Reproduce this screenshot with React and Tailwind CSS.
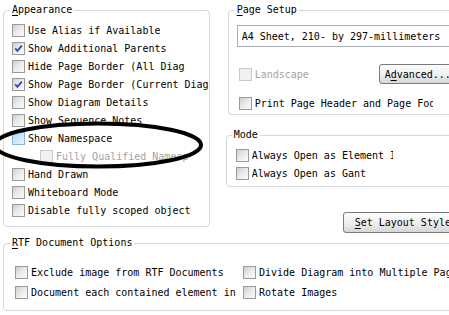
import React from 'react';

const GROUP = 'border border-[#d3d7db] rounded-[4px] m-0 p-0';
const LEGEND = 'leading-[12px] px-[2px]';

function Box({ checked, state }) {
  let tone = 'border-[#9a9a9a] bg-linear-to-br from-[#cfcfcf] via-[#ebebeb] to-[#fbfbfb]';
  if (state === 'hover') tone = 'border-[#86b5e0] bg-linear-to-br from-[#b3d8f3] via-[#cfe6f8] to-[#e9f4fc]';
  if (state === 'disabled') tone = 'border-[#c9c9c9] bg-[#f1f1f1]';
  return (
    <span className={`relative block w-[13px] h-[13px] shrink-0 border ${tone}`}>
      {checked && (
        <svg className="absolute inset-0" width="11" height="11" viewBox="0 0 11 11">
          <path d="M2.2 5.4 L4.4 7.8 L8.8 2.6" fill="none" stroke="#2c4f9e" strokeWidth="1.8" />
        </svg>
      )}
    </span>
  );
}

function Check({ label, checked, state, labelClass = '', className = '' }) {
  return (
    <div className={`flex items-center h-[18px] whitespace-nowrap ${className}`}>
      <Box checked={checked} state={state} />
      <span className={`ml-[3px] overflow-hidden ${state === 'disabled' ? 'text-[#a3a3a3]' : ''} ${labelClass}`}>
        {label}
      </span>
    </div>
  );
}

export default function App() {
  return (
    <div className="relative w-[449px] h-[315px] overflow-hidden bg-white text-black font-['DejaVu_Sans_Mono',monospace] text-[10px]">
      <div className="flex h-[233px]">
        <fieldset className={`${GROUP} ml-[3px] mt-[4px] w-[210px] h-[223px]`}>
          <legend className={`${LEGEND} ml-[6px]`}>
            <span className="underline underline-offset-2">A</span>ppearance
          </legend>
          <div className="pl-[8px] pt-[5px] flex flex-col">
            <Check label="Use Alias if Available" />
            <Check label="Show Additional Parents" checked />
            <Check label="Hide Page Border (All Diag" />
            <Check label="Show Page Border (Current Diag" checked />
            <Check label="Show Diagram Details" />
            <Check label="Show Sequence Notes" />
            <Check label="Show Namespace" state="hover" />
            <Check label="Fully Qualified Namespace" state="disabled" className="ml-[28px]" labelClass="w-[132px]" />
            <Check label="Hand Drawn" />
            <Check label="Whiteboard Mode" />
            <Check label="Disable fully scoped object" />
          </div>
        </fieldset>

        <div className="ml-[16px] flex flex-col">
          <fieldset className={`${GROUP} ml-[2px] mt-[4px] w-[240px] h-[111px]`}>
            <legend className={`${LEGEND} ml-[6px]`}>
              <span className="underline underline-offset-2">P</span>age Setup
            </legend>
            <div className="pl-[8px] pt-[9px]">
              <div className="w-[230px] h-[22px] border border-[#a7adb3] flex items-center pl-[4px] whitespace-nowrap">
                A4 Sheet, 210- by 297-millimeters
              </div>
              <div className="flex items-center h-[20px] mt-[17px] ml-[2px]">
                <Check label="Landscape" state="disabled" className="w-[140px]" />
                <div className="w-[90px] h-[20px] border border-[#7a7a7a] rounded-[3px] bg-linear-to-b from-[#fdfdfd] via-[#f0f0f0] to-[#d8d8d8] flex items-center pl-[5px] whitespace-nowrap">
                  A<span className="underline underline-offset-2">d</span>vanced...
                </div>
              </div>
              <Check label="Print Page Header and Page Footer" className="mt-[10px] ml-[2px]" labelClass="w-[178px]" />
            </div>
          </fieldset>

          <fieldset className={`${GROUP} mt-[14px] w-[240px] h-[58px]`}>
            <legend className={`${LEGEND} ml-[5px]`}>Mode</legend>
            <div className="pl-[9px] pt-[5px] flex flex-col">
              <Check label="Always Open as Element I" labelClass="w-[141px]" />
              <Check label="Always Open as Gant" />
            </div>
          </fieldset>

          <div className="mt-[25px] ml-[117px] w-[110px] h-[21px] border border-[#7a7a7a] rounded-[3px] bg-linear-to-b from-[#fdfdfd] via-[#f0f0f0] to-[#d6d6d6] flex items-center pl-[11px] whitespace-nowrap">
            <span className="underline underline-offset-2">S</span>et Layout Style
          </div>
        </div>
      </div>

      <fieldset className={`${GROUP} ml-[3px] mt-[4px] w-[470px] h-[74px]`}>
        <legend className={`${LEGEND} ml-[6px]`}>
          <span className="underline underline-offset-2">R</span>TF Document Options
        </legend>
        <div className="pl-[11px] pt-[14px] grid grid-cols-[228px_1fr] gap-y-[2px]">
          <Check label="Exclude image from RTF Documents" />
          <Check label="Divide Diagram into Multiple Pages" />
          <Check label="Document each contained element in" />
          <Check label="Rotate Images" />
        </div>
      </fieldset>

      <svg className="absolute inset-0 pointer-events-none" width="449" height="315">
        <ellipse cx="98" cy="145" rx="103" ry="21.5" fill="none" stroke="#000" strokeWidth="4" />
      </svg>
    </div>
  );
}
